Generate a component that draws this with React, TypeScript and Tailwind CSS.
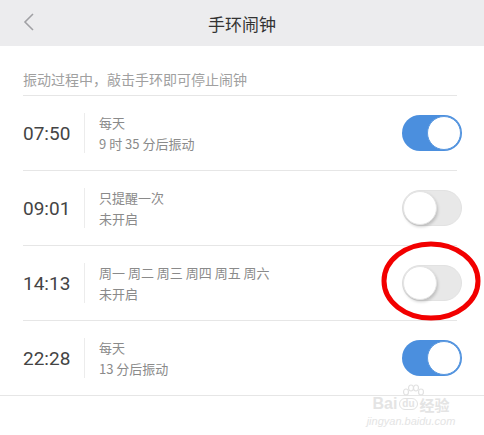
import React from "react";

const alarms = [
  { time: "07:50", repeat: "每天", status: "9 时 35 分后振动", on: true },
  { time: "09:01", repeat: "只提醒一次", status: "未开启", on: false },
  { time: "14:13", repeat: "周一 周二 周三 周四 周五 周六", status: "未开启", on: false },
  { time: "22:28", repeat: "每天", status: "13 分后振动", on: true },
];

function Toggle({ on }: { on: boolean }) {
  return on ? (
    <div className="relative w-[60px] h-[36px] rounded-full bg-[#4b8fde] shrink-0">
      <div className="absolute right-[1px] top-[1px] w-[34px] h-[34px] rounded-full bg-white border border-[#5d9ae0]" />
    </div>
  ) : (
    <div className="relative w-[60px] h-[36px] rounded-full bg-[#e8e8e8] border border-[#e2e2e2] shrink-0">
      <div className="absolute left-0 top-0 w-[34px] h-[34px] rounded-full bg-white shadow-[1px_2px_3px_rgba(0,0,0,0.18)] border border-[#e4e4e4]" />
    </div>
  );
}

export default function App() {
  return (
    <div
      className="relative w-[484px] h-[435px] bg-white overflow-hidden"
      style={{ fontFamily: '"Noto Sans CJK SC", "Noto Sans", sans-serif' }}
    >
      <div className="relative h-[46px] bg-[#ececee] flex items-center justify-center">
        <svg className="absolute left-[22px] top-[12px]" width="14" height="20" viewBox="0 0 14 20">
          <path d="M11 2 L3 10 L11 18" fill="none" stroke="#a0a0a4" strokeWidth="1.6" />
        </svg>
        <span className="text-[17px] text-[#333] leading-none">手环闹钟</span>
      </div>

      <div className="pl-[23px] pr-[22px]">
        <div className="pt-[22px] pb-[5px] text-[14px] leading-[22px] text-[#a0a0a0]">
          振动过程中，敲击手环即可停止闹钟
        </div>
        <div className="h-px bg-[#e6e6e6] mr-[5px]" />
        {alarms.map((a, i) => (
          <div key={i}>
            <div className="h-[74px] flex items-center">
              <div
                className="w-[61px] text-[19px] text-[#444] leading-none"
                style={{ fontFamily: 'Roboto, "Liberation Sans", sans-serif' }}
              >
                {a.time}
              </div>
              <div className="w-px h-[40px] bg-[#ececec]" />
              <div className="flex-1 pl-[14px] flex flex-col gap-[3px] text-[13px] leading-[18px] text-[#8a8a8a]">
                <span>{a.repeat}</span>
                <span>{a.status}</span>
              </div>
              <Toggle on={a.on} />
            </div>
            {i < alarms.length - 1 && <div className="h-px bg-[#e6e6e6] mr-[5px]" />}
          </div>
        ))}
      </div>
      <div className="h-[1px] bg-[#e6e6e6]" />

      {/* red annotation */}
      <svg className="absolute left-[380px] top-[240px]" width="102" height="82" viewBox="0 0 102 82">
        <ellipse cx="51" cy="41" rx="47" ry="37" fill="none" stroke="#f20000" strokeWidth="5" />
      </svg>

      {/* watermark */}
      <div
        className="absolute left-[366px] top-[384px] w-[90px] flex flex-col items-center text-[#e4e4e4] pointer-events-none"
        style={{ fontFamily: '"Liberation Sans", sans-serif' }}
      >
        <svg width="22" height="12" viewBox="0 0 22 12" className="ml-[4px]">
          <g fill="none" stroke="#e2e2e2" strokeWidth="1.2">
            <ellipse cx="4" cy="8" rx="2.5" ry="3" />
            <ellipse cx="9" cy="4" rx="2.5" ry="3" />
            <ellipse cx="14" cy="4" rx="2.5" ry="3" />
            <ellipse cx="19" cy="8" rx="2.5" ry="3" />
          </g>
        </svg>
        <div className="flex items-center gap-[2px] text-[16px] font-bold leading-none">
          <span>Bai</span>
          <span className="rounded-full border border-[#e2e2e2] px-[2px] text-[10px]">du</span>
          <span className="text-[15px]" style={{ fontFamily: '"Noto Sans CJK SC", sans-serif' }}>经验</span>
        </div>
        <div className="text-[11px] mt-[4px] italic leading-none">jingyan.baidu.com</div>
      </div>
    </div>
  );
}
